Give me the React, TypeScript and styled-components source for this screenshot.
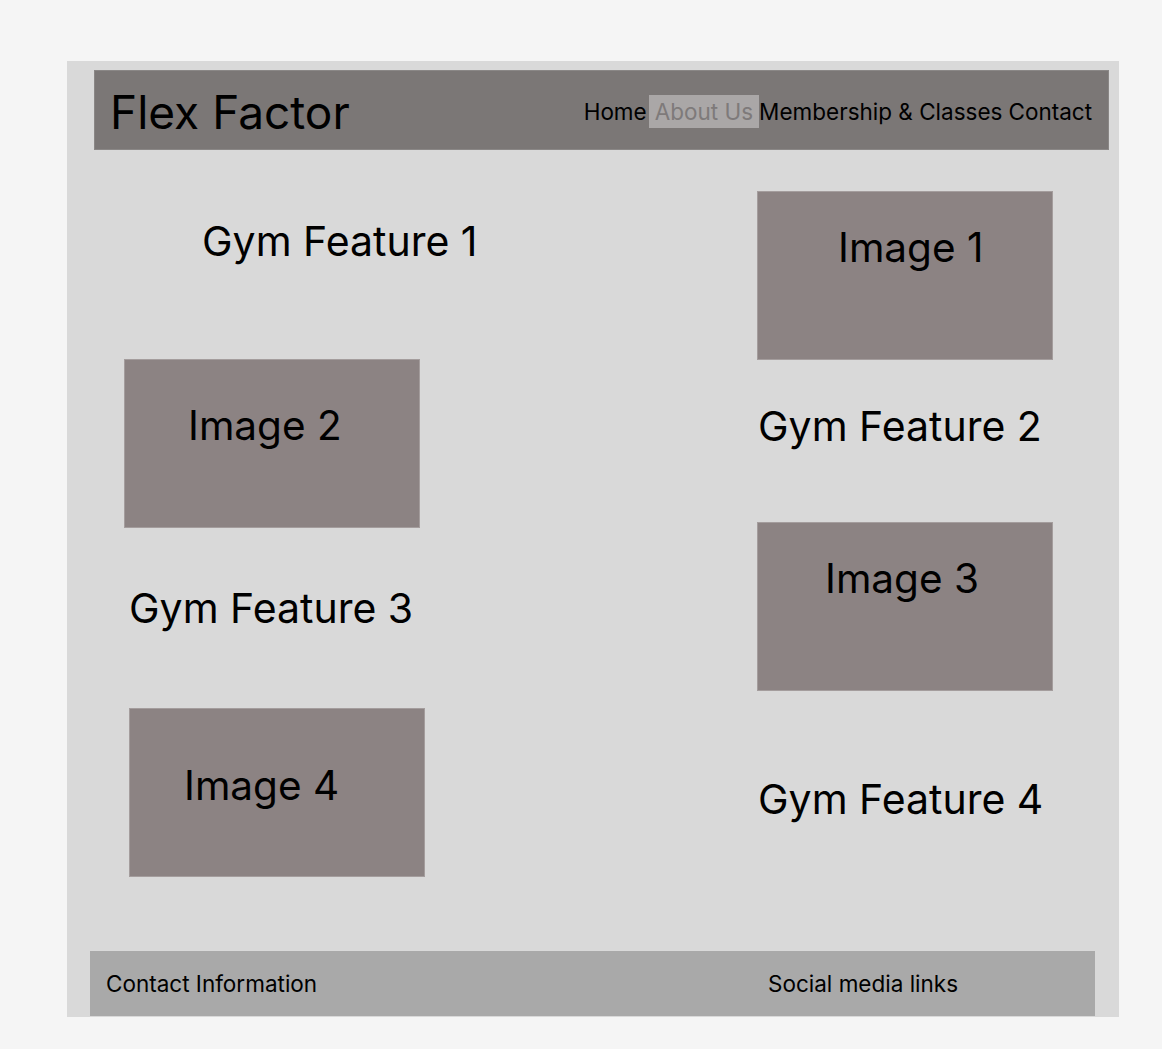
import React from 'react'
import styled, { createGlobalStyle } from 'styled-components'

const GlobalStyle = createGlobalStyle`
    html, body {
        margin: 0;
        padding: 0;
        background: #f5f5f5;
    }
    body {
        font-family: Inter, "Noto Sans", sans-serif;
        color: #000;
    }
`

const Page = styled.div`
    width: 1162px;
    min-height: 1049px;
    padding: 61px 0 0 67px;
    box-sizing: border-box;
`

const Frame = styled.div`
    width: 1052px;
    height: 956px;
    background: #d9d9d9;
    display: flex;
    flex-direction: column;
`

const Header = styled.header`
    margin: 9px 10px 0 27px;
    height: 80px;
    box-sizing: border-box;
    padding: 4px 16px 0 15px;
    background: #7b7776;
    border: 1px solid #8a8786;
    display: flex;
    align-items: center;
    justify-content: space-between;
`

const Title = styled.h1`
    margin: 0;
    font-size: 46px;
    font-weight: 400;
    line-height: 54px;
`

const Nav = styled.nav`
    display: flex;
    align-items: center;
    margin-bottom: 2px;
`

const NavLink = styled.a<{ $active?: boolean; $after: number }>`
    font-size: 22.5px;
    line-height: normal;
    text-decoration: none;
    cursor: pointer;
    margin-right: ${p => p.$after}px;
    padding: 3px ${p => (p.$active ? '6px' : '0')};
    color: ${p => (p.$active ? '#7e7a7a' : '#000')};
    background: ${p => (p.$active ? '#aaa7a7' : 'transparent')};
    white-space: pre;
`

const Main = styled.main`
    flex: 1;
    display: flex;
`

const Column = styled.div<{ $width: number }>`
    width: ${p => p.$width}px;
    display: flex;
    flex-direction: column;
    align-items: flex-start;
`

const Feature = styled.h2<{ $top: number; $left: number }>`
    margin: ${p => p.$top}px 0 0 ${p => p.$left}px;
    font-size: 41px;
    font-weight: 400;
    line-height: 48px;
    white-space: nowrap;
`

const ImageBox = styled.div<{ $top: number; $left: number; $padTop: number; $padLeft: number }>`
    margin: ${p => p.$top}px 0 0 ${p => p.$left}px;
    width: 296px;
    height: 169px;
    box-sizing: border-box;
    padding: ${p => p.$padTop}px 0 0 ${p => p.$padLeft}px;
    background: #8c8383;
    border: 1px solid #a49d9d;
    font-size: 40.5px;
    line-height: 48px;
    white-space: nowrap;
`

const Footer = styled.footer`
    margin: 0 24px 1px 23px;
    height: 65px;
    box-sizing: border-box;
    padding-left: 16px;
    background: #a9a9a9;
    display: flex;
    align-items: center;
    font-size: 22.5px;
`

const FooterItem = styled.div<{ $width?: number }>`
    flex: 0 0 ${p => (p.$width ? `${p.$width}px` : 'auto')};
`

const navItems = [
    { label: 'Home', after: 2 },
    { label: 'About Us', after: 0, active: true },
    { label: 'Membership & Classes', after: 6 },
    { label: 'Contact', after: 0 },
]

const App: React.FC = () => {
    return (
        <>
            <GlobalStyle />
            <Page>
                <Frame>
                    <Header>
                        <Title>Flex Factor</Title>
                        <Nav>
                            {navItems.map(item => (
                                <NavLink key={item.label} $active={item.active} $after={item.after}>
                                    {item.label}
                                </NavLink>
                            ))}
                        </Nav>
                    </Header>
                    <Main>
                        <Column $width={690}>
                            <Feature $top={67} $left={135}>Gym Feature 1</Feature>
                            <ImageBox $top={94} $left={57} $padTop={42} $padLeft={63}>Image 2</ImageBox>
                            <Feature $top={56} $left={62}>Gym Feature 3</Feature>
                            <ImageBox $top={76} $left={62} $padTop={53} $padLeft={54}>Image 4</ImageBox>
                        </Column>
                        <Column $width={300}>
                            <ImageBox $top={41} $left={0} $padTop={32} $padLeft={80}>Image 1</ImageBox>
                            <Feature $top={42} $left={1}>Gym Feature 2</Feature>
                            <ImageBox $top={72} $left={0} $padTop={32} $padLeft={67}>Image 3</ImageBox>
                            <Feature $top={84} $left={1}>Gym Feature 4</Feature>
                        </Column>
                    </Main>
                    <Footer>
                        <FooterItem $width={662}>Contact Information</FooterItem>
                        <FooterItem>Social media links</FooterItem>
                    </Footer>
                </Frame>
            </Page>
        </>
    )
}

export default App
